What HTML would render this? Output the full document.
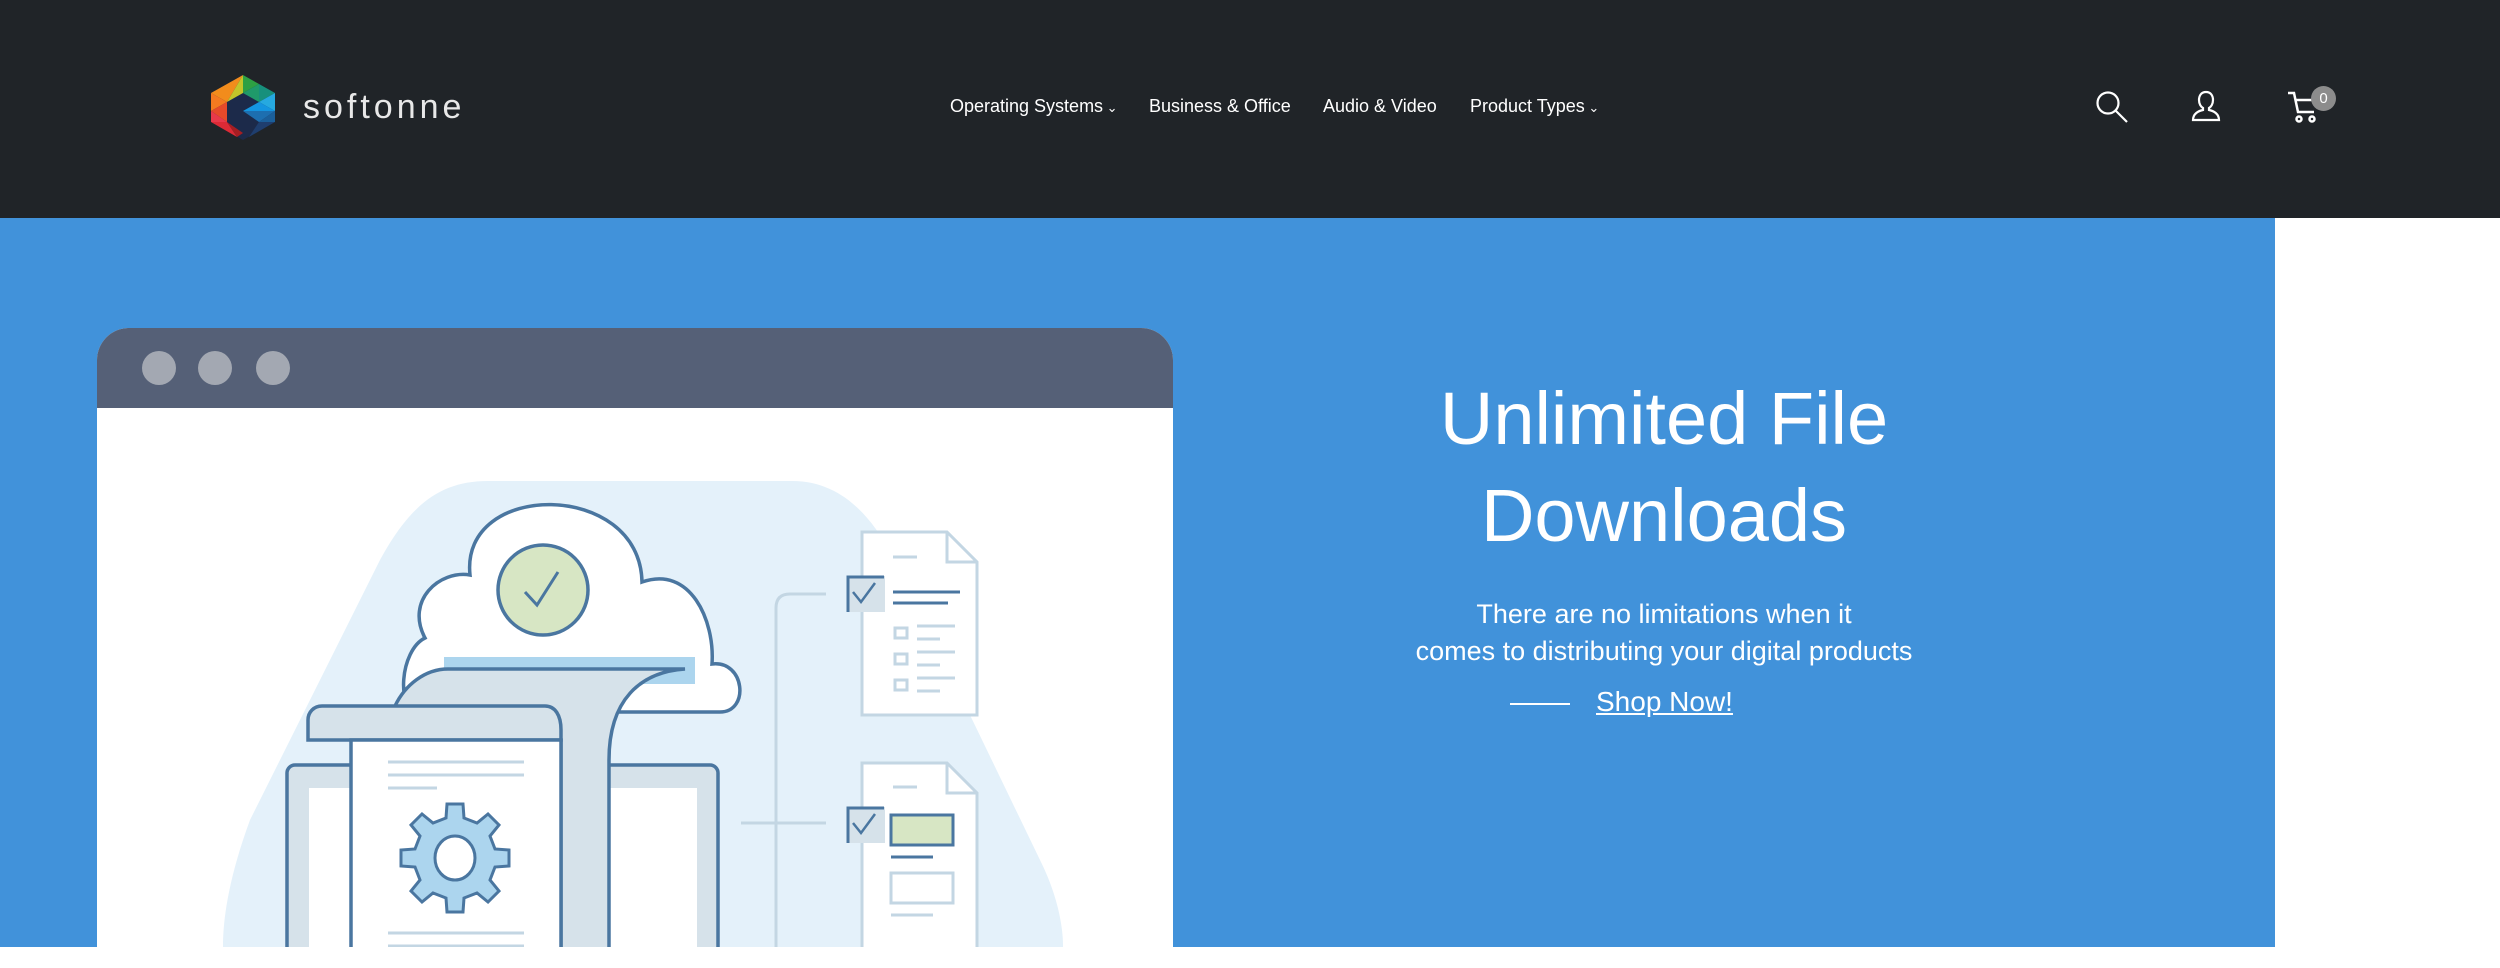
<!DOCTYPE html>
<html><head><meta charset="utf-8">
<style>
*{margin:0;padding:0;box-sizing:border-box}
html,body{width:2500px;height:968px;overflow:hidden;background:#fff;font-family:"Liberation Sans",sans-serif}
.hdr{position:absolute;left:0;top:0;width:2500px;height:218px;background:#202428}
.brand{position:absolute;left:303px;top:88px;color:#e8e8e8;font-size:34px;letter-spacing:4px}
.nav{position:absolute;top:96px;font-size:18px;color:#fff;white-space:nowrap}
.hero{position:absolute;left:0;top:218px;width:2275px;height:729px;background:#4192da;overflow:hidden}
.t{position:absolute;left:1264px;width:800px;text-align:center;color:#fff}
</style></head><body>
<div class="hdr">
<svg style="position:absolute;left:209px;top:75px" width="68" height="66" viewBox="0 0 68 66">
<polygon points="34,0 2,18 2,47 34,65 66,47 66,18" fill="#1c2a4a"/>
<polygon points="34,0 2,18 18,27" fill="#f28c1c"/>
<polygon points="34,0 18,27 34,18" fill="#c3c52a"/>
<polygon points="34,0 34,18 50,9" fill="#2da043"/>
<polygon points="50,9 34,18 50,27" fill="#1f9a6a"/>
<polygon points="50,9 66,18 50,27" fill="#17907c"/>
<polygon points="66,18 50,27 66,36" fill="#26a9e0"/>
<polygon points="50,27 66,36 34,36" fill="#1495e0"/>
<polygon points="34,36 66,36 50,47" fill="#1d6fb0"/>
<polygon points="66,36 66,47 50,47" fill="#1b5f9a"/>
<polygon points="50,47 66,47 40,62" fill="#1f3e6e"/>
<polygon points="2,18 18,27 2,36" fill="#f47a20"/>
<polygon points="2,36 18,27 18,47" fill="#e64a2a"/>
<polygon points="2,36 18,47 2,47" fill="#e8394a"/>
<polygon points="2,47 18,47 28,62" fill="#dc2a36"/>
<polygon points="18,47 34,58 28,62" fill="#a61e22"/>
</svg>
<div class="brand">softonne</div>
<div class="nav" style="left:950px">Operating Systems<span style="font-size:13px"> ⌄</span></div>
<div class="nav" style="left:1149px">Business &amp; Office</div>
<div class="nav" style="left:1323px">Audio &amp; Video</div>
<div class="nav" style="left:1470px">Product Types<span style="font-size:13px"> ⌄</span></div>
<svg style="position:absolute;left:2095px;top:90px" width="34" height="34" viewBox="0 0 34 34" fill="none" stroke="#fff" stroke-width="2.2"><circle cx="13" cy="13" r="10.5"/><line x1="21" y1="21" x2="32" y2="32"/></svg>
<svg style="position:absolute;left:2191px;top:90px" width="30" height="32" viewBox="0 0 30 32" fill="none" stroke="#fff" stroke-width="2.2"><path d="M15 2c-5 0-7 4-7 8 0 4 2 7 4 8v2c-5 1-10 4-10 10h26c0-6-5-9-10-10v-2c2-1 4-4 4-8 0-4-2-8-7-8z"/></svg>
<svg style="position:absolute;left:2286px;top:90px" width="36" height="36" viewBox="0 0 36 36" fill="none" stroke="#fff" stroke-width="2.5"><path d="M2 3h6l4 19h16"/><path d="M10 10h16"/><circle cx="13" cy="29" r="2.5"/><circle cx="26" cy="29" r="2.5"/></svg>
<div style="position:absolute;left:2311px;top:86px;width:25px;height:25px;border-radius:50%;background:#8c8c8c;color:#fff;font-size:15px;line-height:25px;text-align:center">0</div>
</div>
<div class="hero">
<div style="position:absolute;left:97px;top:110px;width:1076px;height:619px;background:#fff;border-radius:32px 32px 0 0;overflow:hidden">
<div style="height:80px;background:#556077"></div>
<div style="position:absolute;left:45px;top:23px;width:34px;height:34px;border-radius:50%;background:#a3a8b2"></div>
<div style="position:absolute;left:101px;top:23px;width:34px;height:34px;border-radius:50%;background:#a3a8b2"></div>
<div style="position:absolute;left:159px;top:23px;width:34px;height:34px;border-radius:50%;background:#a3a8b2"></div>
</div>
<svg style="position:absolute;left:0;top:-218px" width="1200" height="947" viewBox="0 0 1200 947">
<path d="M488 481 L792 481 C850 481 880 530 900 570 L1040 860 C1065 910 1063 947 1063 947 L223 947 C223 920 228 880 250 820 L380 560 C410 505 440 481 488 481Z" fill="#e4f1fa"/>
<g stroke="#4a76a0" stroke-width="3.5">
<path d="M420 712 C395 712 400 650 425 638 C405 600 440 570 470 575 C460 480 640 480 642 582 C690 565 715 620 712 664 C745 660 750 712 720 712 Z" fill="#fff"/>
<circle cx="543" cy="590" r="45" fill="#d7e6c4"/>
<path d="M525 592 L537 605 L558 572" fill="none" stroke-width="3"/>
</g>
<rect x="444" y="657" width="251" height="27" fill="#acd5ee"/>
<g stroke="#4a76a0" stroke-width="3.5" fill="#d6e2ea">
<rect x="287" y="765" width="431" height="200" rx="8"/>
<rect x="309" y="788" width="388" height="180" fill="#fff" stroke="none"/>
<path d="M448 669 L685 669 C640 672 609 700 609 760 L609 960 L561 960 L561 740 L395 706 C405 685 425 669 448 669Z"/>
<path d="M322 706 L545 706 C555 706 561 715 561 730 L561 740 L308 740 L308 720 C308 712 314 706 322 706Z"/>
<rect x="351" y="740" width="210" height="230" fill="#fff"/>
</g>
<g stroke="#c3d6e3" stroke-width="3">
<line x1="388" y1="762" x2="524" y2="762"/><line x1="388" y1="775" x2="524" y2="775"/><line x1="388" y1="788" x2="437" y2="788"/>
<line x1="388" y1="933" x2="524" y2="933"/><line x1="388" y1="946" x2="524" y2="946"/>
</g>
<g transform="translate(455 858)" stroke="#4a76a0" stroke-width="3">
<path d="M-8 -54 L8 -54 L9 -40 L22 -35 L33 -44 L44 -33 L35 -22 L40 -9 L54 -8 L54 8 L40 9 L35 22 L44 33 L33 44 L22 35 L9 40 L8 54 L-8 54 L-9 40 L-22 35 L-33 44 L-44 33 L-35 22 L-40 9 L-54 8 L-54 -8 L-40 -9 L-35 -22 L-44 -33 L-33 -44 L-22 -35 L-9 -40Z" fill="#acd5ee"/>
<ellipse cx="0" cy="0" rx="20" ry="22" fill="#fff"/>
</g>
<g stroke="#c3d6e3" stroke-width="3" fill="none">
<path d="M826 594 L790 594 Q776 594 776 608 L776 960"/>
<line x1="741" y1="823" x2="826" y2="823"/>
<path d="M862 532 L947 532 L977 562 L977 715 L862 715Z" fill="#fff"/><path d="M947 532 L947 562 L977 562"/>
<path d="M862 763 L947 763 L977 793 L977 960 L862 960Z" fill="#fff"/><path d="M947 763 L947 793 L977 793"/>
<line x1="893" y1="557" x2="917" y2="557"/><line x1="893" y1="787" x2="917" y2="787"/>
<rect x="895" y="628" width="12" height="10"/><rect x="895" y="654" width="12" height="10"/><rect x="895" y="680" width="12" height="10"/>
<line x1="917" y1="626" x2="955" y2="626"/><line x1="917" y1="639" x2="940" y2="639"/>
<line x1="917" y1="652" x2="955" y2="652"/><line x1="917" y1="665" x2="940" y2="665"/>
<line x1="917" y1="678" x2="955" y2="678"/><line x1="917" y1="691" x2="940" y2="691"/>
<rect x="891" y="873" width="62" height="30"/><line x1="891" y1="915" x2="933" y2="915"/>
</g>
<g>
<rect x="847" y="576" width="38" height="36" fill="#d6e2ea"/><path d="M848 612 L848 577 L884 577" stroke="#4a76a0" stroke-width="3" fill="none"/>
<path d="M853 592 L861 602 L875 583" stroke="#4a76a0" stroke-width="2.5" fill="none"/>
<rect x="847" y="807" width="38" height="36" fill="#d6e2ea"/><path d="M848 843 L848 808 L884 808" stroke="#4a76a0" stroke-width="3" fill="none"/>
<path d="M853 823 L861 833 L875 814" stroke="#4a76a0" stroke-width="2.5" fill="none"/>
<line x1="893" y1="592" x2="960" y2="592" stroke="#4a76a0" stroke-width="3"/>
<line x1="893" y1="603" x2="948" y2="603" stroke="#4a76a0" stroke-width="3"/>
<rect x="891" y="815" width="62" height="30" fill="#d7e6c4" stroke="#4a76a0" stroke-width="3"/>
<line x1="891" y1="857" x2="933" y2="857" stroke="#4a76a0" stroke-width="3"/>
</g>
</svg>
<div class="t" style="top:152px;font-size:74px;line-height:97px">Unlimited File<br>Downloads</div>
<div class="t" style="top:378px;font-size:27px;line-height:37px">There are no limitations when it<br>comes to distributing your digital products</div>
<div style="position:absolute;left:1510px;top:485px;width:60px;height:2px;background:#fff"></div>
<div style="position:absolute;left:1596px;top:468px;font-size:28px;color:#fff;text-decoration:underline">Shop Now!</div>
</div>
</body></html>
